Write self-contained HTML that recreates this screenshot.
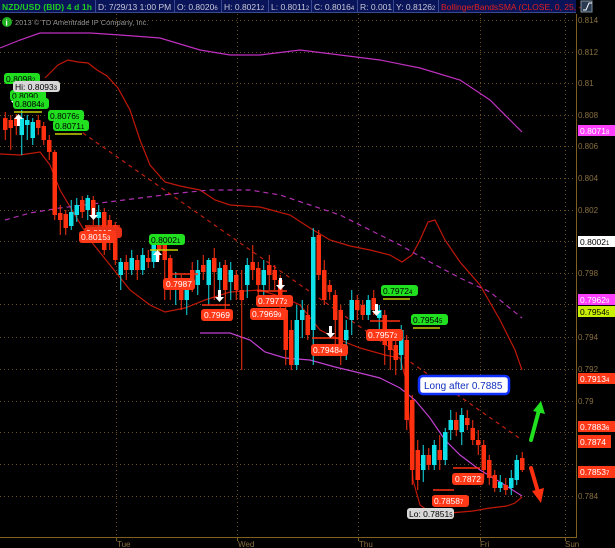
<!DOCTYPE html>
<html><head><meta charset="utf-8"><style>
html,body{margin:0;padding:0;background:#000;width:615px;height:548px;overflow:hidden}
svg{display:block}
text{font-family:"Liberation Sans",sans-serif}
</style></head><body>
<svg id="s" width="615" height="548" viewBox="0 0 615 548" xmlns="http://www.w3.org/2000/svg">
<rect width="615" height="548" fill="#000"/>
<g stroke="#6a5220" stroke-width="1" stroke-dasharray="1,3">
<line x1="0" y1="20.5" x2="576" y2="20.5"/><line x1="0" y1="52.5" x2="576" y2="52.5"/><line x1="0" y1="83.5" x2="576" y2="83.5"/><line x1="0" y1="115.5" x2="576" y2="115.5"/><line x1="0" y1="146.5" x2="576" y2="146.5"/><line x1="0" y1="178.5" x2="576" y2="178.5"/><line x1="0" y1="210.5" x2="576" y2="210.5"/><line x1="0" y1="241.5" x2="576" y2="241.5"/><line x1="0" y1="273.5" x2="576" y2="273.5"/><line x1="0" y1="304.5" x2="576" y2="304.5"/><line x1="0" y1="337.5" x2="576" y2="337.5"/><line x1="0" y1="369.5" x2="576" y2="369.5"/><line x1="0" y1="401.5" x2="576" y2="401.5"/><line x1="0" y1="432.5" x2="576" y2="432.5"/><line x1="0" y1="464.5" x2="576" y2="464.5"/><line x1="0" y1="496.5" x2="576" y2="496.5"/>
<line x1="116.5" y1="14" x2="116.5" y2="537"/><line x1="237.5" y1="14" x2="237.5" y2="537"/><line x1="358.5" y1="14" x2="358.5" y2="537"/><line x1="480.5" y1="14" x2="480.5" y2="537"/><line x1="565.5" y1="14" x2="565.5" y2="537"/>
</g>
<line x1="576.5" y1="14" x2="576.5" y2="538" stroke="#806020"/>
<line x1="0" y1="537.5" x2="577" y2="537.5" stroke="#806020"/>
<g stroke="#806020"><line x1="116.5" y1="537" x2="116.5" y2="541"/><line x1="237.5" y1="537" x2="237.5" y2="541"/><line x1="358.5" y1="537" x2="358.5" y2="541"/><line x1="480.5" y1="537" x2="480.5" y2="541"/><line x1="565.5" y1="537" x2="565.5" y2="541"/></g>
<g font-size="8" fill="#8a7040">
<text x="578" y="23">0.814</text><text x="578" y="55">0.812</text><text x="578" y="86">0.81</text><text x="578" y="118">0.808</text><text x="578" y="149">0.806</text><text x="578" y="181">0.804</text><text x="578" y="213">0.802</text><text x="578" y="276">0.798</text><text x="578" y="340">0.794</text><text x="578" y="372">0.792</text><text x="578" y="404">0.79</text><text x="578" y="499">0.784</text>
<text x="117" y="547">Tue</text><text x="238" y="547">Wed</text><text x="359" y="547">Thu</text><text x="480" y="547">Fri</text><text x="565" y="547">Sun</text>
</g>
<polyline fill="none" stroke="#c030c0" stroke-width="1.2" points="0,48 20,40 40,33 60,33 90,33 120,35 160,38 200,50 230,55 260,55 300,50 340,55 380,60 420,68 460,80 490,100 510,120 522,132"/>
<polyline fill="none" stroke="#c01808" stroke-width="1.2" points="45,78 58,65 68,60 78,62 88,63 97,70 107,76 118,88 130,110 140,140 150,165 165,182 180,186 200,190 215,200 230,205 260,207 290,215 310,228 330,240 350,246 370,250 390,255 402,262 412,255 420,240 428,222 435,220 445,240 460,262 480,285 500,320 515,350 522,370"/>
<polyline fill="none" stroke="#c01808" stroke-width="1.2" points="0,154 20,155 40,152 50,165 60,190 75,215 90,240 110,265 130,290 150,305 165,312 185,308 205,300 230,292 260,290 285,298 300,305 320,330 340,340 360,348 385,355 400,358 406,380 410,430 413,480 420,505 430,512 450,513 473,511 490,508 507,506 515,503 522,497"/>
<polyline fill="none" stroke="#b030b0" stroke-width="1.2" stroke-dasharray="5,4" points="5,220 30,213 60,208 100,203 140,198 180,193 210,190 250,190 280,195 310,205 340,215 370,230 400,245 430,262 460,278 490,292 522,318"/>
<polyline fill="none" stroke="#c040d0" stroke-width="1.2" points="200,333 230,333 250,340 265,352 285,358 310,360 335,367 360,373 380,378 400,388 415,400 430,418 445,440 460,455 480,470 500,482 522,496"/>
<line x1="50" y1="110" x2="522" y2="440" stroke="#c02010" stroke-width="1.2" stroke-dasharray="4,4"/>
<g id="c"></g>
<g stroke-width="1.5">
<line x1="14" y1="112" x2="42" y2="112" stroke="#c8d000"/><line x1="55" y1="134" x2="82" y2="134" stroke="#c8d000"/>
<line x1="150" y1="250" x2="178" y2="250" stroke="#c8d000"/><line x1="383" y1="299" x2="410" y2="299" stroke="#c8d000"/><line x1="413" y1="328" x2="440" y2="328" stroke="#c8d000"/>
<line x1="85" y1="226" x2="120" y2="226" stroke="#ff3010"/><line x1="170" y1="274" x2="198" y2="274" stroke="#ff3010"/><line x1="202" y1="305" x2="230" y2="305" stroke="#ff3010"/>
<line x1="257" y1="291" x2="287" y2="291" stroke="#ff3010"/><line x1="312" y1="338" x2="340" y2="338" stroke="#ff3010"/><line x1="370" y1="321" x2="400" y2="321" stroke="#ff3010"/>
<line x1="453" y1="468" x2="480" y2="468" stroke="#ff3010"/><line x1="433" y1="490" x2="454" y2="490" stroke="#ff3010"/>
</g>
<g fill="#fff">
<path d="M92,208h3v7h3l-4.5,5-4.5-5h3z"/><path d="M218,290h3v7h3l-4.5,5-4.5-5h3z"/><path d="M279,278h3v7h3l-4.5,5-4.5-5h3z"/><path d="M329,326h3v7h3l-4.5,5-4.5-5h3z"/><path d="M375,304h3v7h3l-4.5,5-4.5-5h3z"/><path d="M14,94h3v7h3l-4.5,5-4.5-5h3z"/>
<path d="M156,262h3v-7h3l-4.5,-5-4.5,5h3z"/><path d="M17,126h3v-7h3l-4.5,-5-4.5,5h3z"/>
</g>
<g font-size="8.5">
<rect x="4" y="73" width="36" height="11" rx="3" fill="#20e020"/><text x="6" y="82" fill="#000">0.8098<tspan font-size="6">2</tspan></text>
<rect x="10" y="90" width="36" height="11" rx="3" fill="#20e020"/><text x="12" y="99" fill="#000">0.8090</text>
<rect x="13" y="81" width="47" height="11" rx="3" fill="#d8d8d8"/><text x="15" y="90" fill="#000">Hi: 0.8093<tspan font-size="6">3</tspan></text>
<rect x="13" y="98" width="36" height="11" rx="3" fill="#20e020"/><text x="15" y="107" fill="#000">0.8084<tspan font-size="6">8</tspan></text>
<rect x="48" y="110" width="36" height="11" rx="3" fill="#20e020"/><text x="50" y="119" fill="#000">0.8076<tspan font-size="6">5</tspan></text>
<rect x="53" y="120" width="36" height="11" rx="3" fill="#20e020"/><text x="55" y="129" fill="#000">0.8071<tspan font-size="6">1</tspan></text>
<rect x="84" y="227" width="38" height="11" rx="3" fill="#e83018"/><text x="86" y="236" fill="#fff">0.8018<tspan font-size="6">7</tspan></text>
<rect x="79" y="231" width="37" height="12" rx="3" fill="#ff3818"/><text x="81" y="240" fill="#fff">0.8015<tspan font-size="6">3</tspan></text>
<rect x="149" y="234" width="36" height="11" rx="3" fill="#20e020"/><text x="151" y="243" fill="#000">0.8002<tspan font-size="6">1</tspan></text>
<rect x="163" y="278" width="32" height="12" rx="3" fill="#ff3818"/><text x="166" y="287" fill="#fff">0.7987</text>
<rect x="201" y="309" width="32" height="12" rx="3" fill="#ff3818"/><text x="204" y="318" fill="#fff">0.7969</text>
<rect x="256" y="295" width="37" height="12" rx="3" fill="#ff3818"/><text x="258" y="304" fill="#fff">0.7977<tspan font-size="6">2</tspan></text>
<rect x="250" y="308" width="37" height="12" rx="3" fill="#ff3818"/><text x="252" y="317" fill="#fff">0.7969<tspan font-size="6">9</tspan></text>
<rect x="311" y="344" width="37" height="12" rx="3" fill="#ff3818"/><text x="313" y="353" fill="#fff">0.7948<tspan font-size="6">4</tspan></text>
<rect x="366" y="329" width="37" height="12" rx="3" fill="#ff3818"/><text x="368" y="338" fill="#fff">0.7957<tspan font-size="6">2</tspan></text>
<rect x="381" y="285" width="37" height="11" rx="3" fill="#20e020"/><text x="383" y="294" fill="#000">0.7972<tspan font-size="6">4</tspan></text>
<rect x="411" y="314" width="37" height="11" rx="3" fill="#20e020"/><text x="413" y="323" fill="#000">0.7954<tspan font-size="6">5</tspan></text>
<rect x="452" y="473" width="32" height="12" rx="3" fill="#ff3818"/><text x="455" y="482" fill="#fff">0.7872</text>
<rect x="432" y="495" width="37" height="12" rx="3" fill="#ff3818"/><text x="434" y="504" fill="#fff">0.7858<tspan font-size="6">7</tspan></text>
<rect x="407" y="508" width="47" height="11" rx="3" fill="#d8d8d8"/><text x="409" y="517" fill="#000">Lo: 0.7851<tspan font-size="6">5</tspan></text>
</g>
<rect x="419" y="376" width="90" height="18" rx="4" fill="#fff" stroke="#1030ff" stroke-width="2.5"/>
<text x="424" y="389" font-size="10" fill="#1030c0">Long after 0.7885</text>
<line x1="531" y1="440" x2="539" y2="410" stroke="#20e020" stroke-width="4" stroke-linecap="round"/><path d="M533,411l8,-10 4,13z" fill="#20e020"/>
<line x1="531" y1="468" x2="538" y2="492" stroke="#ff3010" stroke-width="4" stroke-linecap="round"/><path d="M532,491l12,-3 -3,15z" fill="#ff3010"/>
<g font-size="8.5">
<rect x="578" y="125" width="37" height="11" fill="#ff40ff"/><text x="580" y="134" fill="#fff">0.8071<tspan font-size="6">8</tspan></text>
<rect x="578" y="236" width="37" height="11" fill="#fff"/><text x="580" y="245" fill="#000">0.8002<tspan font-size="6">1</tspan></text>
<rect x="578" y="294" width="37" height="11" fill="#ff40ff"/><text x="580" y="303" fill="#fff">0.7962<tspan font-size="6">9</tspan></text>
<rect x="578" y="306" width="37" height="11" fill="#c8f000"/><text x="580" y="315" fill="#000">0.7954<tspan font-size="6">5</tspan></text>
<rect x="578" y="373" width="37" height="11" fill="#ff3818"/><text x="580" y="382" fill="#fff">0.7913<tspan font-size="6">4</tspan></text>
<rect x="578" y="421" width="37" height="11" fill="#ff3818"/><text x="580" y="430" fill="#fff">0.7883<tspan font-size="6">6</tspan></text>
<rect x="578" y="435" width="33" height="13" fill="#ff3818"/><text x="580" y="445" fill="#fff">0.7874</text>
<rect x="578" y="466" width="37" height="12" fill="#ff3818"/><text x="580" y="475" fill="#fff">0.7853<tspan font-size="6">7</tspan></text>
</g>
<rect x="0" y="0" width="576" height="13" fill="#0a1458"/>
<g stroke="#3a4a90"><line x1="95.5" y1="0" x2="95.5" y2="13"/><line x1="174.5" y1="0" x2="174.5" y2="13"/><line x1="221.5" y1="0" x2="221.5" y2="13"/><line x1="268.5" y1="0" x2="268.5" y2="13"/><line x1="311.5" y1="0" x2="311.5" y2="13"/><line x1="357.5" y1="0" x2="357.5" y2="13"/><line x1="393.5" y1="0" x2="393.5" y2="13"/><line x1="438.5" y1="0" x2="438.5" y2="13"/><line x1="0" y1="12.5" x2="576" y2="12.5"/></g>
<g font-size="8.5" fill="#c8c8d8">
<text x="2" y="10" fill="#20d020" font-weight="bold" textLength="90">NZD/USD (BID) 4 d 1h</text>
<text x="98" y="10">D: 7/29/13 1:00 PM</text>
<text x="177" y="10">O: 0.8020<tspan font-size="6">6</tspan></text>
<text x="224" y="10">H: 0.8021<tspan font-size="6">2</tspan></text>
<text x="271" y="10">L: 0.8011<tspan font-size="6">2</tspan></text>
<text x="314" y="10">C: 0.8016<tspan font-size="6">4</tspan></text>
<text x="360" y="10">R: 0.001</text>
<text x="396" y="10">Y: 0.8126<tspan font-size="6">2</tspan></text>
<text x="441" y="10" fill="#e02020">BollingerBandsSMA (CLOSE, 0, 25, -..</text>
</g>
<rect x="581" y="1" width="11" height="11" fill="#2a3a50" stroke="#8090a0"/><path d="M583,10h3l3,-7h3" stroke="#fff" fill="none"/>
<circle cx="7" cy="22" r="5" fill="#20b020"/><text x="5.5" y="25.5" font-size="8" fill="#fff" font-weight="bold">i</text>
<text x="15" y="25" font-size="7.5" fill="#909090">2013 © TD Ameritrade IP Company, Inc.</text>
</svg>
<script>
var d=[[118,130,112,140],[120,128,115,150],[118,126,114,135],[135,118,110,155],[125,120,115,140],[138,122,118,145],[120,128,115,135],[126,140,122,145],[140,152,135,160],[152,215,150,220],[213,220,205,235],[214,228,210,235],[226,212,200,230],[215,205,198,222],[200,212,196,218],[210,198,195,220],[200,215,196,225],[218,212,205,228],[212,250,208,255],[220,232,215,250],[225,260,222,265],[275,262,258,290],[262,270,255,280],[270,258,250,275],[260,270,255,280],[270,255,248,275],[258,262,250,268],[262,242,238,268],[245,250,235,260],[240,260,238,300],[258,290,255,300],[290,278,272,305],[280,300,275,310],[300,285,280,315],[270,285,262,292],[285,270,260,295],[265,272,255,280],[285,260,258,305],[258,272,248,300],[280,268,262,290],[265,290,260,310],[282,270,262,300],[275,290,270,300],[290,300,270,370],[285,265,258,298],[262,270,245,280],[268,285,262,300],[285,270,260,300],[265,275,255,290],[270,280,265,290],[280,300,275,320],[310,350,300,365],[330,365,320,370],[365,320,305,370],[320,310,300,338],[315,335,305,340],[330,237,228,365],[235,275,230,280],[270,300,260,305],[285,292,280,300],[295,320,290,345],[310,350,305,365],[340,330,320,360],[320,300,290,335],[300,310,295,320],[305,315,300,320],[315,300,295,320],[298,310,290,315],[318,310,305,340],[315,345,310,365],[340,350,330,370],[345,360,340,375],[355,330,325,370],[340,420,335,430],[400,470,395,485],[450,480,440,490],[470,455,445,482],[455,465,448,470],[465,445,440,470],[450,460,435,470],[460,432,428,465],[430,420,410,440],[420,430,412,436],[432,415,408,445],[418,425,410,430],[428,440,420,445],[440,445,430,455],[445,470,440,480],[460,478,455,485],[475,488,470,492],[488,482,475,492],[485,490,478,495],[488,478,470,495],[480,460,455,485],[458,470,452,472]];
var g=document.getElementById('c'),h='';
d.forEach(function(a,i){var x=3+i*5.5,up=a[1]<a[0],col=up?'#10e0e8':'#ff3010',t=Math.min(a[0],a[1]),b=Math.max(a[0],a[1]);
h+='<line x1="'+(x+2.25)+'" y1="'+a[2]+'" x2="'+(x+2.25)+'" y2="'+a[3]+'" stroke="'+col+'" stroke-width="1"/><rect x="'+x+'" y="'+t+'" width="4.5" height="'+Math.max(1,b-t)+'" fill="'+col+'"/>';});
g.innerHTML=h;
</script>
</body></html>
